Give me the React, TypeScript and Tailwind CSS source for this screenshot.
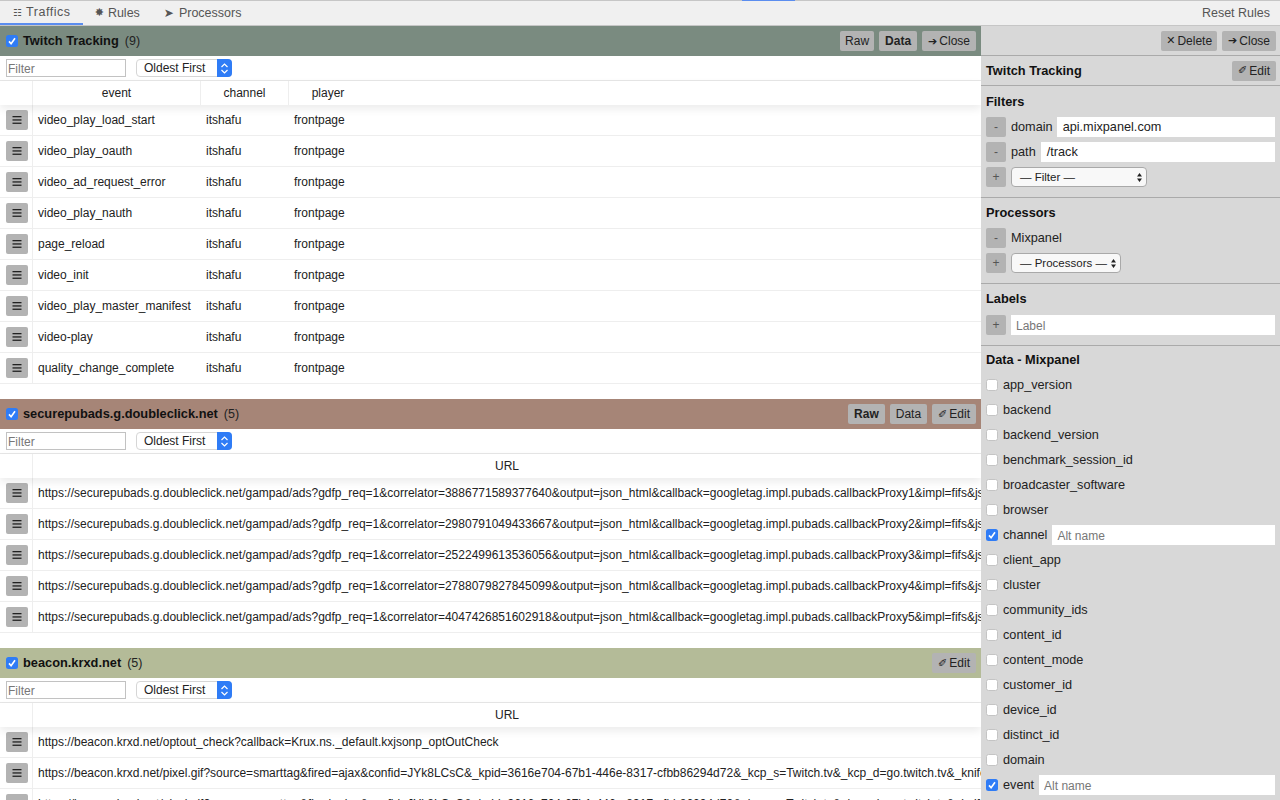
import { ReactNode } from 'react';

const FONT = "font-['Liberation_Sans','DejaVu_Sans',sans-serif]";

const trackRows = [
  'video_play_load_start',
  'video_play_oauth',
  'video_ad_request_error',
  'video_play_nauth',
  'page_reload',
  'video_init',
  'video_play_master_manifest',
  'video-play',
  'quality_change_complete',
];

const gampad = (correlator: string, n: number) =>
  `https://securepubads.g.doubleclick.net/gampad/ads?gdfp_req=1&correlator=${correlator}&output=json_html&callback=googletag.impl.pubads.callbackProxy${n}&impl=fifs&json_a=1&eid=108809080`;

const adRows = [
  gampad('3886771589377640', 1),
  gampad('2980791049433667', 2),
  gampad('2522499613536056', 3),
  gampad('2788079827845099', 4),
  gampad('4047426851602918', 5),
];

const beaconRows = [
  'https://beacon.krxd.net/optout_check?callback=Krux.ns._default.kxjsonp_optOutCheck',
  'https://beacon.krxd.net/pixel.gif?source=smarttag&fired=ajax&confid=JYk8LCsC&_kpid=3616e704-67b1-446e-8317-cfbb86294d72&_kcp_s=Twitch.tv&_kcp_d=go.twitch.tv&_knifed=1&sview=1',
  'https://beacon.krxd.net/pixel.gif?source=smarttag&fired=ajax&confid=JYk8LCsC&_kpid=3616e704-67b1-446e-8317-cfbb86294d72&_kcp_s=Twitch.tv&_kcp_d=go.twitch.tv&_knifed=1&sview=1',
];

const dataFields = [
  'app_version',
  'backend',
  'backend_version',
  'benchmark_session_id',
  'broadcaster_software',
  'browser',
  'channel',
  'client_app',
  'cluster',
  'community_ids',
  'content_id',
  'content_mode',
  'customer_id',
  'device_id',
  'distinct_id',
  'domain',
  'event',
];

function Check({ checked }: { checked?: boolean }) {
  return (
    <span
      className={`flex h-[12px] w-[12px] shrink-0 items-center justify-center rounded-[2.5px] ${
        checked ? 'bg-[#2f7cf6]' : 'border border-[#c4c4c4] bg-white'
      }`}
    >
      {checked && (
        <svg width="10" height="10" viewBox="0 0 10 10" fill="none">
          <path d="M2 5.4 4.1 7.8 8 2.2" stroke="white" strokeWidth="1.6" />
        </svg>
      )}
    </span>
  );
}

function Btn({ children, bold, className = 'px-[6px]' }: { children: ReactNode; bold?: boolean; className?: string }) {
  return (
    <button
      className={`flex h-[20px] items-center rounded-[2px] bg-[#b3b3b3] text-[12px] text-[#222] ${
        bold ? 'font-bold' : ''
      } ${className}`}
    >
      {children}
    </button>
  );
}

function Glyph({ children }: { children: ReactNode }) {
  return <span className="mr-[2px] font-['DejaVu_Sans'] text-[11px] leading-none">{children}</span>;
}

function SortSelect() {
  return (
    <div className="flex h-[18px] w-[96px] items-center justify-between rounded-[4px] border border-[#d6d6d6] bg-white pl-[7px] text-[12px] text-[#222]">
      <span>Oldest First</span>
      <span className="-mr-px flex h-[18px] w-[15px] items-center justify-center rounded-r-[4px] bg-[#2f7cf6]">
        <svg width="9" height="13" viewBox="0 0 9 13" fill="none" stroke="white" strokeWidth="1.2">
          <path d="M1.5 5 4.5 2l3 3M1.5 8l3 3 3-3" />
        </svg>
      </span>
    </div>
  );
}

function FilterRow() {
  return (
    <div className="flex h-[25px] shrink-0 items-center gap-[10px] border-b border-[#e6e6e6] bg-white pl-[6px]">
      <input
        placeholder="Filter"
        className="h-[18px] w-[120px] border border-[#c2c2c2] bg-white px-[1px] pt-[2px] text-[12px] placeholder:text-[#777]"
      />
      <SortSelect />
    </div>
  );
}

function SectionHead({
  title,
  count,
  color,
  children,
}: {
  title: string;
  count: number;
  color: string;
  children: ReactNode;
}) {
  return (
    <div className={`flex h-[30px] shrink-0 items-center justify-between pl-[6px] pr-[5px] ${color}`}>
      <div className="flex items-center gap-[5px]">
        <Check checked />
        <span className="text-[12.8px] font-bold text-[#111]">{title}</span>
        <span className="ml-[1px] text-[12.5px] text-[#222]">({count})</span>
      </div>
      <div className="flex items-center gap-[5px]">{children}</div>
    </div>
  );
}

function HeadCell({ children, className = '' }: { children?: ReactNode; className?: string }) {
  return (
    <div className={`flex h-full shrink-0 items-center justify-center border-r border-[#eeeeee] ${className}`}>
      {children}
    </div>
  );
}

function MenuBtn() {
  return (
    <span className="flex h-[20px] w-[22px] items-center justify-center rounded-[2px] bg-[#b3b3b3]">
      <svg width="10" height="8" viewBox="0 0 10 8" fill="#222">
        <rect x="0.5" y="0" width="9" height="1.3" />
        <rect x="0.5" y="3.3" width="9" height="1.3" />
        <rect x="0.5" y="6.6" width="9" height="1.3" />
      </svg>
    </span>
  );
}

function Row({ children }: { children: ReactNode }) {
  return (
    <div className="flex h-[31px] shrink-0 items-center border-b border-[#eeeeee] bg-white text-[12px] text-[#222]">
      <div className="flex h-full w-[33px] shrink-0 items-center border-r border-[#eeeeee] pl-[6px]">
        <MenuBtn />
      </div>
      {children}
    </div>
  );
}

function UrlTable({ rows }: { rows: string[] }) {
  return (
    <>
      <div className="relative z-10 flex h-[24px] shrink-0 items-center bg-white text-[12px] text-[#222] shadow-[0_4px_8px_rgba(0,0,0,0.08)]">
        <HeadCell className="w-[33px]" />
        <div className="flex-1 text-center">URL</div>
      </div>
      {rows.map((url, i) => (
        <Row key={i}>
          <div className="min-w-0 flex-1 overflow-hidden whitespace-nowrap pl-[5px]">{url}</div>
        </Row>
      ))}
    </>
  );
}

function SmallBtn({ children }: { children: ReactNode }) {
  return (
    <span className="flex h-[20px] w-[20px] shrink-0 items-center justify-center rounded-[2px] bg-[#b3b3b3] text-[12px] text-[#555]">
      {children}
    </span>
  );
}

function PanelSection({
  title,
  children,
  className = 'pt-[8px]',
  titleGap = 'mb-[8px]',
}: {
  title: string;
  children: ReactNode;
  className?: string;
  titleGap?: string;
}) {
  return (
    <div className={`border-b border-[#aaaaaa] px-[5px] pb-[10px] ${className}`}>
      <div className={`text-[12.8px] font-bold leading-[14px] text-[#111] ${titleGap}`}>{title}</div>
      <div className="flex flex-col gap-[5px]">{children}</div>
    </div>
  );
}

function PanelSelect({ label, width }: { label: string; width: string }) {
  return (
    <div
      className={`flex h-[20px] items-center justify-between whitespace-nowrap rounded-[4px] border border-[#a9a9a9] bg-[#f8f8f8] pl-[8px] pr-[3px] text-[11.5px] text-[#222] ${width}`}
    >
      <span className="pt-[2px]">{label}</span>
      <svg width="7" height="11" viewBox="0 0 7 11" fill="#222" className="shrink-0">
        <path d="M3.5 1 6 4.5H1zM3.5 10 1 6.5h5z" />
      </svg>
    </div>
  );
}

function RightPanel() {
  return (
    <aside className="h-full w-[299px] shrink-0 overflow-hidden bg-[#d8d8d8] text-[12.7px] text-[#222]">
      <div className="flex h-[30px] items-center justify-end gap-[5px] border-b border-[#aaaaaa] pr-[4px]">
        <Btn className="px-[5px]">
          <Glyph>✕</Glyph>Delete
        </Btn>
        <Btn>
          <Glyph>➔</Glyph>Close
        </Btn>
      </div>
      <div className="flex h-[30px] items-center justify-between border-b border-[#aaaaaa] pl-[5px] pr-[4px]">
        <span className="text-[12.8px] font-bold text-[#111]">Twitch Tracking</span>
        <Btn>
          <Glyph>✐</Glyph>Edit
        </Btn>
      </div>
      <PanelSection title="Filters" className="pt-[9px]">
        <div className="flex h-[20px] items-center">
          <SmallBtn>-</SmallBtn>
          <span className="ml-[5px] mr-[4px] pt-[2px]">domain</span>
          <div className="flex h-[20px] flex-1 items-center bg-white pl-[6px] pt-[2px]">api.mixpanel.com</div>
        </div>
        <div className="flex h-[20px] items-center">
          <SmallBtn>-</SmallBtn>
          <span className="ml-[5px] mr-[5px] pt-[2px]">path</span>
          <div className="flex h-[20px] flex-1 items-center bg-white pl-[6px] pt-[2px]">/track</div>
        </div>
        <div className="flex h-[20px] items-center gap-[5px]">
          <SmallBtn>+</SmallBtn>
          <PanelSelect label="— Filter —" width="w-[136px]" />
        </div>
      </PanelSection>
      <PanelSection title="Processors">
        <div className="flex h-[20px] items-center gap-[5px]">
          <SmallBtn>-</SmallBtn>
          <span className="pt-[2px]">Mixpanel</span>
        </div>
        <div className="flex h-[20px] items-center gap-[5px]">
          <SmallBtn>+</SmallBtn>
          <PanelSelect label="— Processors —" width="w-[110px]" />
        </div>
      </PanelSection>
      <PanelSection title="Labels" titleGap="mb-[9px]">
        <div className="flex h-[20px] items-center gap-[5px]">
          <SmallBtn>+</SmallBtn>
          <input placeholder="Label" className="h-[20px] flex-1 bg-white pl-[5px] pt-[2px] text-[12px] placeholder:text-[#777]" />
        </div>
      </PanelSection>
      <div className="px-[5px] pt-[7px]">
        <div className="mb-[5px] text-[12.8px] font-bold leading-[14px] text-[#111]">Data - Mixpanel</div>
        <div className="flex flex-col">
          {dataFields.map((field) => {
            const on = field === 'channel' || field === 'event';
            return (
              <div key={field} className="flex h-[25px] shrink-0 items-center gap-[5px]">
                <Check checked={on} />
                <span className="pt-[2px]">{field}</span>
                {on && (
                  <input
                    placeholder="Alt name"
                    className="h-[20px] flex-1 bg-white pl-[5px] pt-[2px] text-[12px] placeholder:text-[#777]"
                  />
                )}
              </div>
            );
          })}
        </div>
      </div>
    </aside>
  );
}

function Tab({
  glyph,
  label,
  active,
  glyphClass,
  track = '',
  padding = 'px-[12px]',
}: {
  glyph: string;
  label: string;
  active?: boolean;
  glyphClass: string;
  track?: string;
  padding?: string;
}) {
  return (
    <div
      className={`flex h-full items-center text-[12.5px] text-[#555] ${padding} ${
        active ? 'border-b-2 border-[#5b8def]' : ''
      }`}
    >
      <span className={`font-['DejaVu_Sans'] ${glyphClass}`}>{glyph}</span>
      <span className={track}>{label}</span>
    </div>
  );
}

export default function App() {
  return (
    <div className={`flex h-[800px] w-[1280px] flex-col overflow-hidden bg-white ${FONT}`}>
      <nav className="relative flex h-[26px] shrink-0 items-center justify-between border-b border-t border-[#c6c6c6] bg-[#f0f0f0]">
        <span className="absolute -top-px left-[742px] h-[1px] w-[53px] bg-[#5b8def]" />
        <div className="flex h-full items-center">
          <Tab
            glyph="☷"
            label="Traffics"
            active
            glyphClass="mr-[4px] text-[10px]"
            track="tracking-[0.55px]"
            padding="pl-[13px] pr-[12px]"
          />
          <Tab glyph="✸" label="Rules" glyphClass="mr-[4px] text-[11px]" />
          <Tab glyph="➤" label="Processors" glyphClass="mr-[5px] text-[12px]" />
        </div>
        <span className="pr-[10px] text-[12.5px] text-[#555]">Reset Rules</span>
      </nav>
      <div className="flex min-h-0 flex-1">
        <main className="flex h-full w-[981px] shrink-0 flex-col overflow-hidden">
          <SectionHead title="Twitch Tracking" count={9} color="bg-[#7a8b80]">
            <Btn className="px-[5px]">Raw</Btn>
            <Btn bold>Data</Btn>
            <Btn>
              <Glyph>➔</Glyph>Close
            </Btn>
          </SectionHead>
          <FilterRow />
          <div className="relative z-10 flex h-[24px] shrink-0 items-center bg-white text-[12px] text-[#222] shadow-[0_4px_8px_rgba(0,0,0,0.08)]">
            <HeadCell className="w-[33px]" />
            <HeadCell className="w-[168px]">event</HeadCell>
            <HeadCell className="w-[88px]">channel</HeadCell>
            <div className="w-[78px] text-center">player</div>
          </div>
          {trackRows.map((name) => (
            <Row key={name}>
              <div className="w-[168px] shrink-0 pl-[5px]">{name}</div>
              <div className="w-[88px] shrink-0 pl-[5px]">itshafu</div>
              <div className="pl-[5px]">frontpage</div>
            </Row>
          ))}
          <div className="h-[15px] shrink-0" />
          <SectionHead title="securepubads.g.doubleclick.net" count={5} color="bg-[#a68577]">
            <Btn bold>Raw</Btn>
            <Btn>Data</Btn>
            <Btn>
              <Glyph>✐</Glyph>Edit
            </Btn>
          </SectionHead>
          <FilterRow />
          <UrlTable rows={adRows} />
          <div className="h-[15px] shrink-0" />
          <SectionHead title="beacon.krxd.net" count={5} color="bg-[#b4bb98]">
            <Btn>
              <Glyph>✐</Glyph>Edit
            </Btn>
          </SectionHead>
          <FilterRow />
          <UrlTable rows={beaconRows} />
        </main>
        <RightPanel />
      </div>
    </div>
  );
}
